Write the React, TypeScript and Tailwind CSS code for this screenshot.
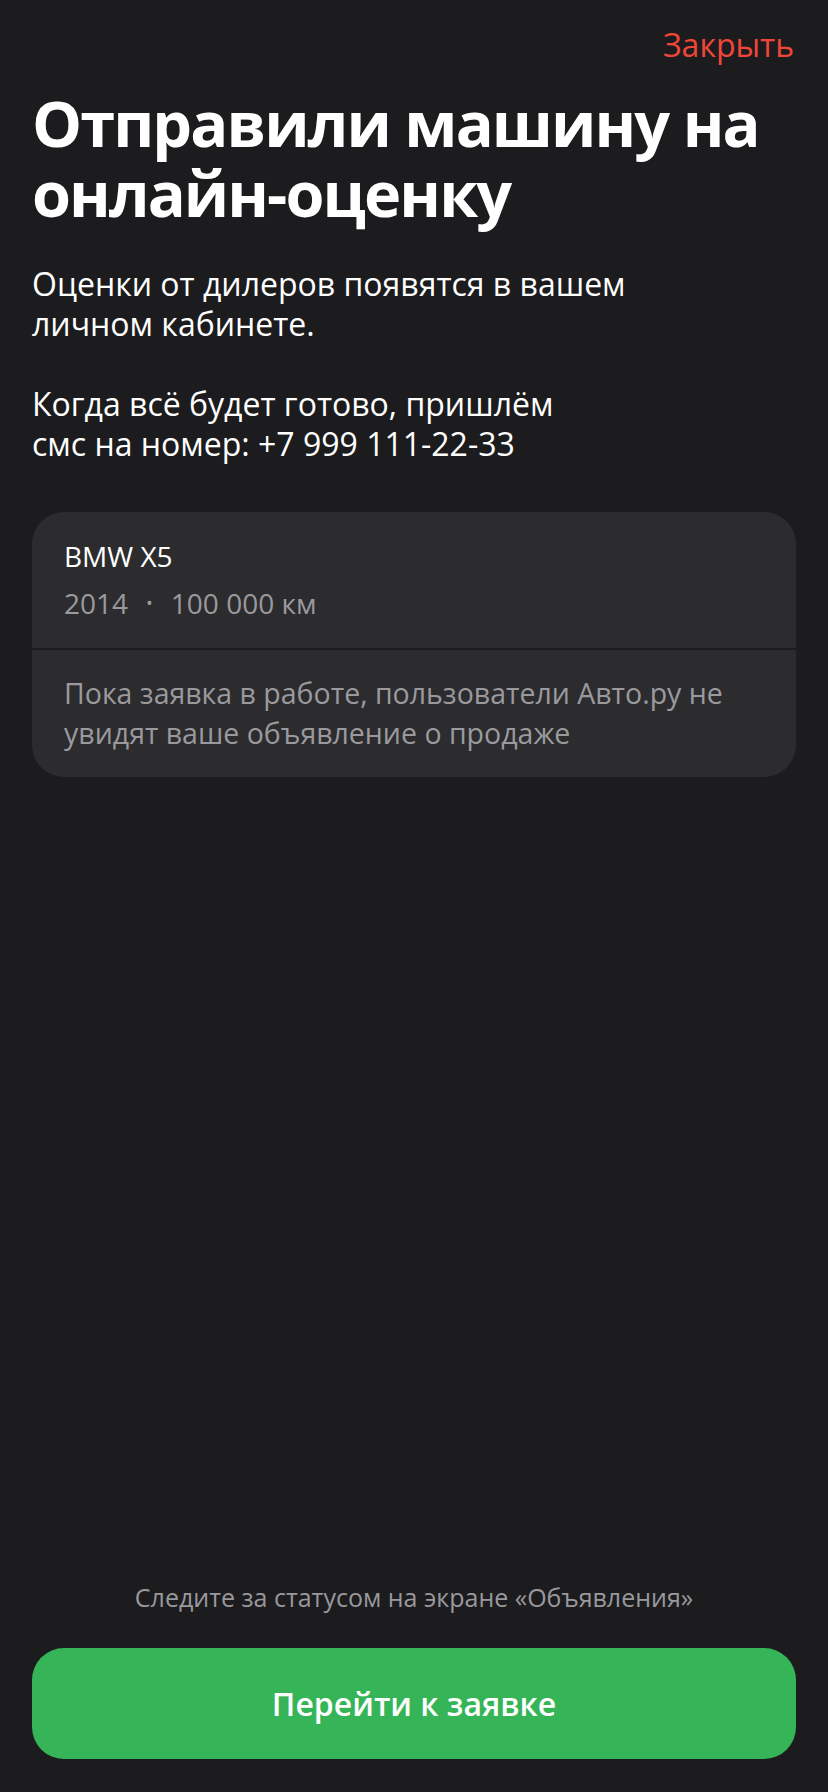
export default function App() {
  return (
    <div
      className="min-h-[1792px] w-full bg-[#1c1c1e] flex flex-col text-white"
      style={{ fontFamily: '"Open Sans", "Noto Sans", sans-serif' }}
    >
      <div className="flex justify-end pt-[26px] pr-[34px]">
        <button className="text-[32px] leading-[38px] text-[#f0463a]">Закрыть</button>
      </div>

      <div className="px-8">
        <h1 className="mt-[24px] text-[63px] leading-[70px] font-bold tracking-[-1.9px]">
          Отправили машину на онлайн-оценку
        </h1>

        <p className="mt-[36px] text-[32px] leading-[40px]">
          Оценки от дилеров появятся в вашем
          <br />
          личном кабинете.
        </p>
        <p className="mt-[40px] text-[32px] leading-[40px]">
          Когда всё будет готово, пришлём
          <br />
          смс на номер: +7 999 111-22-33
        </p>

        <div className="mt-[48px] rounded-[32px] bg-[#2c2c2e] overflow-hidden">
          <div className="px-8 pt-[26px] pb-[27px]">
            <div className="text-[28px] leading-[36px]">BMW X5</div>
            <div className="mt-[11px] text-[28px] leading-[36px] text-[#9a9a9e] flex items-center">
              <span>2014</span>
              <span className="mx-[18px] text-[18px]">•</span>
              <span>100 000 км</span>
            </div>
          </div>
          <div className="h-[2px] bg-[#1c1c1e]" />
          <div className="px-8 pt-[23px] pb-[24px] text-[28.5px] leading-[40px] text-[#9a9a9e]">
            Пока заявка в работе, пользователи Авто.ру не увидят ваше объявление о продаже
          </div>
        </div>
      </div>

      <div className="flex-1" />

      <div className="px-8 pb-[33px]">
        <p className="text-center text-[25px] leading-[36px] text-[#98989d]">
          Следите за статусом на экране «Объявления»
        </p>
        <button className="mt-[33px] w-full h-[111px] rounded-[32px] bg-[#35b557] text-[32px] font-semibold text-white">
          Перейти к заявке
        </button>
      </div>
    </div>
  )
}
